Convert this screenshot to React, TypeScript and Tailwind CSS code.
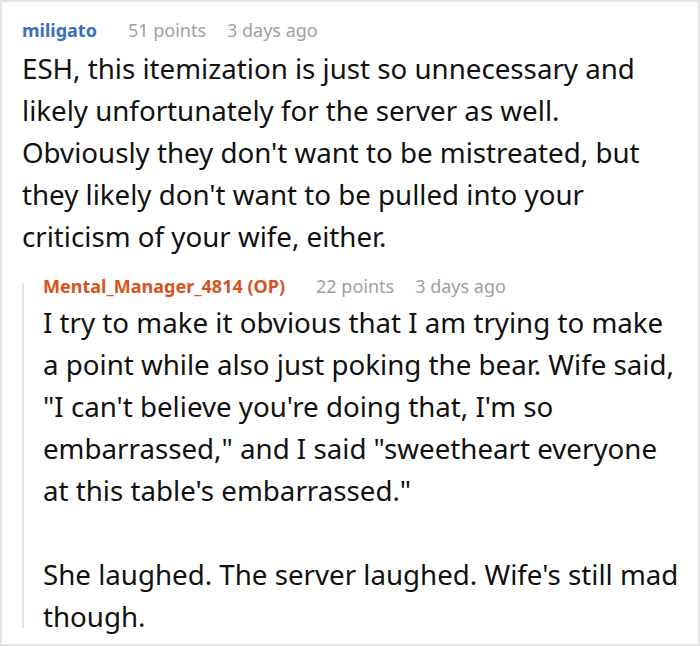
import React from "react";

const mainLines = [
  "ESH, this itemization is just so unnecessary and",
  "likely unfortunately for the server as well.",
  "Obviously they don't want to be mistreated, but",
  "they likely don't want to be pulled into your",
  "criticism of your wife, either.",
];

const replyLines1 = [
  "I try to make it obvious that I am trying to make",
  "a point while also just poking the bear. Wife said,",
  "\"I can't believe you're doing that, I'm so",
  "embarrassed,\" and I said \"sweetheart everyone",
  "at this table's embarrassed.\"",
];

const replyLines2 = ["She laughed. The server laughed. Wife's still mad", "though."];

export default function App() {
  return (
    <div
      className="w-[700px] h-[646px] overflow-hidden bg-white border-2 border-[#e4e4e4] pl-[20px] pt-[16px]"
      style={{ fontFamily: '"Noto Sans", "Open Sans", sans-serif' }}
    >
      <div className="flex items-baseline text-[18px] leading-[24px]">
        <span className="font-bold text-[#3a6cc0]">miligato</span>
        <span className="ml-[31px] text-[#a0a0a0]">51 points</span>
        <span className="ml-[21px] text-[#a0a0a0]">3 days ago</span>
      </div>
      <p className="mt-[5px] text-[27.7px] leading-[42px] text-[#111111]">
        {mainLines.map((l, i) => (
          <span key={i} className="block whitespace-nowrap">
            {l}
          </span>
        ))}
      </p>
      <div className="mt-[17px] flex">
        <div className="my-[9px] w-[2px] shrink-0 bg-[#e2e2e2]" />
        <div className="pl-[19px]">
          <div className="flex items-baseline text-[18px] leading-[24px]">
            <span className="font-bold text-[#d6531d]">Mental_Manager_4814 (OP)</span>
            <span className="ml-[31px] text-[#a0a0a0]">22 points</span>
            <span className="ml-[21px] text-[#a0a0a0]">3 days ago</span>
          </div>
          <div className="mt-[3px] text-[27.7px] leading-[42px] text-[#111111]">
            <p>
              {replyLines1.map((l, i) => (
                <span key={i} className="block whitespace-nowrap">
                  {l}
                </span>
              ))}
            </p>
            <p className="mt-[42px]">
              {replyLines2.map((l, i) => (
                <span key={i} className="block whitespace-nowrap">
                  {l}
                </span>
              ))}
            </p>
          </div>
        </div>
      </div>
    </div>
  );
}
